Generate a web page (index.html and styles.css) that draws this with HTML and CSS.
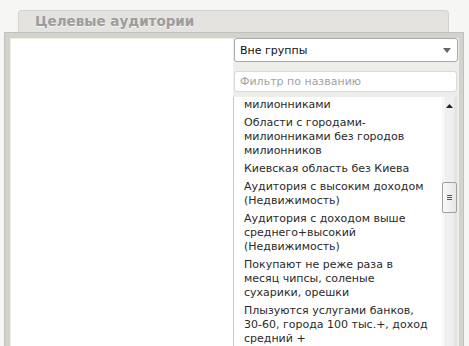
FILE: index.html
```html
<!DOCTYPE html>
<html lang="ru">
<head>
<meta charset="utf-8">
<title>Целевые аудитории</title>
<link rel="stylesheet" href="styles.css">
</head>
<body>
<div class="tab"><span class="tab-title">Целевые аудитории</span></div>
<div class="panel">
  <div class="left"></div>
  <div class="right">
    <div class="select">
      <span class="select-text">Вне группы</span>
      <svg class="select-arrow" width="8" height="5" viewBox="0 0 8 5"><path d="M0 0 L8 0 L4 5 Z" fill="#666"/></svg>
    </div>
    <div class="filter">Фильтр по названию</div>
    <div class="list">
      <div class="items">
        <div class="item">Области с городами-милионниками</div>
        <div class="item">Области с городами-милионниками без городов милионников</div>
        <div class="item">Киевская область без Киева</div>
        <div class="item">Аудитория с высоким доходом (Недвижимость)</div>
        <div class="item">Аудитория с доходом выше среднего+высокий (Недвижимость)</div>
        <div class="item">Покупают не реже раза в месяц чипсы, соленые сухарики, орешки</div>
        <div class="item">Плызуются услугами банков, 30-60, города 100 тыс.+, доход средний +</div>
      </div>
      <div class="scrollbar">
        <div class="sb-up"><svg width="7" height="4" viewBox="0 0 7 4"><path d="M0 4 L7 4 L3.5 0 Z" fill="#222"/></svg></div>
        <div class="sb-thumb"><span></span><span></span><span></span></div>
      </div>
    </div>
  </div>
</div>
</body>
</html>
```
FILE: styles.css
```css
html, body {
  margin: 0;
  padding: 0;
  background: #f6f6f5;
  overflow: hidden;
  height: 346px;
  font-family: "DejaVu Sans", Verdana, sans-serif;
}
.tab {
  margin: 10px 0 0 18px;
  width: 429px;
  height: 21px;
  background: #e4e3df;
  border: 1px solid #d4d3cf;
  border-bottom: none;
  border-radius: 4px 4px 0 0;
}
.tab-title {
  display: block;
  padding-left: 16px;
  line-height: 21px;
  font-size: 13.5px;
  font-weight: bold;
  color: #9c9c9c;
  text-shadow: 0 1px 0 #f4f4f2;
}
.panel {
  display: flex;
  margin-left: 4px;
  width: 450px;
  height: 330px;
  background: #d2d2ce;
  border: 1px solid #c0c0bc;
  padding: 5px 3px 0 5px;
}
.left {
  width: 223px;
  background: #fff;
  box-shadow: inset 1px 1px 0 #eeeedc;
}
.right {
  width: 226px;
  background: #ededea;
  display: flex;
  flex-direction: column;
}
.select {
  margin-left: 1px;
  height: 22px;
  border: 1px solid #a9a9a9;
  border-radius: 3px;
  background: #fff;
  display: flex;
  align-items: center;
  justify-content: space-between;
  padding: 0 5px;
  box-sizing: content-box;
  width: 212px;
}
.select-text {
  font-size: 11px;
  color: #111;
}
.select-arrow {
  margin-right: 1px;
}
.filter {
  margin: 9px 0 0 1px;
  width: 211px;
  height: 19px;
  border: 1px solid #d9d9d7;
  border-radius: 3px;
  background: #fff;
  padding-left: 5px;
  padding-right: 5px;
  font-size: 11px;
  line-height: 19px;
  color: #a2a2a2;
}
.list {
  margin-top: 5px;
  width: 223px;
  flex: 1;
  display: flex;
  background: #fff;
  border-left: 1px solid #c8c8c8;
  overflow: hidden;
}
.items {
  flex: 1;
  margin-top: -15px;
  padding: 0 12px 0 10px;
}
.item {
  padding: 2px 0;
  font-size: 11px;
  line-height: 14px;
  color: #2a2a2a;
}
.scrollbar {
  width: 15px;
  background: linear-gradient(to right, #f7f7f7 0, #f7f7f7 3px, #efefef 3px, #efefef 12px, #e4e4e4 12px);
  position: relative;
}
.sb-up {
  height: 17px;
  display: flex;
  align-items: center;
  justify-content: center;
}
.sb-thumb {
  position: absolute;
  left: 0;
  top: 85px;
  width: 13px;
  height: 29px;
  border: 1px solid #9f9f9f;
  border-radius: 2px;
  background: linear-gradient(to right, #fafafa, #e6e6e6);
  display: flex;
  flex-direction: column;
  align-items: center;
  justify-content: center;
  gap: 1px;
}
.sb-thumb span {
  display: block;
  width: 5px;
  height: 1px;
  background: #555;
}
```
